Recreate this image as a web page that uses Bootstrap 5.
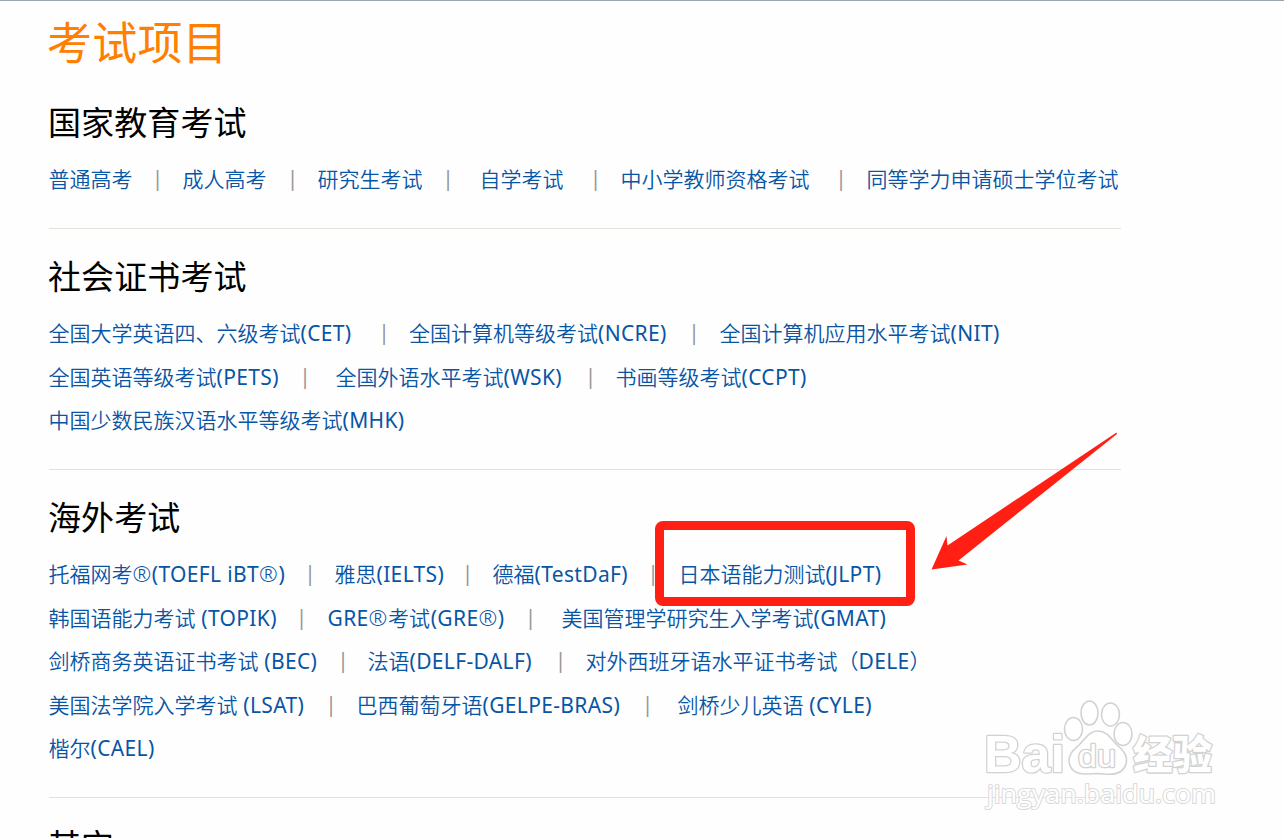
<!DOCTYPE html>
<html lang="zh-CN">
<head>
    <meta charset="UTF-8">
    <meta name="viewport" content="width=device-width, initial-scale=1.0">
    <title>考试项目</title>
    <link href="https://cdn.jsdelivr.net/npm/bootstrap@5.3.0/dist/css/bootstrap.min.css" rel="stylesheet">
    <style>
        body {
            background-color: #fefefe;
            font-family: "Noto Sans", "Noto Sans CJK SC", sans-serif;
            color: #000;
        }
        .page {
            height: 838px;
            border-top: 1px solid #98a6ab;
        }
        .exam-list {
            width: 1121px;
            padding: 8px 0 0 49px;
        }
        .page-title {
            font-family: "Noto Sans CJK SC", sans-serif;
            font-size: 45px;
            line-height: 64px;
            font-weight: 400;
            color: #ff8000;
            text-indent: -2px;
            letter-spacing: .2px;
        }
        .exam-group {
            padding: 18px 0 26.5px;
            border-bottom: 1px solid #e2e2d8;
        }
        .group-title {
            font-family: "Noto Sans CJK SC", sans-serif;
            font-size: 33px;
            line-height: 60px;
            font-weight: 400;
            margin-bottom: 7px;
            text-indent: -1px;
            letter-spacing: .1px;
        }
        .exam-group .group-title {
            margin-top: -2px;
        }
        .page-title + .exam-group {
            padding-top: 20px;
        }
        .exam-line {
            display: grid;
            height: 43.5px;
            line-height: 43.5px;
            font-size: 21px;
            font-weight: 350;
            white-space: nowrap;
        }
        .exam-line a {
            color: #0855a5;
            text-decoration: none;
            text-indent: -.5px;
        }
        .exam-line > span {
            width: 12px;
            line-height: 41px;
            text-align: center;
            font-weight: 400;
            color: #999;
        }
        .en {
            font-weight: 400;
            letter-spacing: .35px;
            margin-left: .8px;
        }
        .en:first-child {
            margin-left: 0;
        }
        .reg {
            font-size: 22.5px;
            font-weight: 300;
            line-height: 1;
            letter-spacing: .6px;
        }
        .line-gaokao { grid-template-columns: 102.5px 31.5px 103.5px 31.5px 124px 38px 109.5px 31.5px 214px 32px auto; }
        .line-cet { grid-template-columns: 329px 31.5px 278.5px 32px auto; }
        .line-pets { grid-template-columns: 250px 37px 248.5px 31.5px auto; }
        .line-toefl { grid-template-columns: 255px 31px 126.5px 31.5px 154px 32px auto; }
        .line-topik { grid-template-columns: 246.5px 32.5px 196.5px 37.5px auto; }
        .line-bec { grid-template-columns: 288px 31px 186.5px 31.5px auto; }
        .line-lsat { grid-template-columns: 276px 32px 284.5px 36.5px auto; }
        .red-box {
            left: 655px;
            top: 520px;
            width: 260px;
            height: 85px;
            border: 9px solid #ff2013;
            border-radius: 8px;
        }
        .arrow {
            left: 920px;
            top: 419px;
        }
        .watermark {
            left: 970px;
            top: 689px;
        }
    </style>
</head>
<body>
    <div class="page position-relative overflow-hidden">
        <main class="exam-list">
            <h1 class="page-title m-0">考试项目</h1>

            <section class="exam-group">
                <h2 class="group-title">国家教育考试</h2>
                <div class="exam-line line-gaokao">
                    <a href="#">普通高考</a><span>|</span>
                    <a href="#">成人高考</a><span>|</span>
                    <a href="#">研究生考试</a><span>|</span>
                    <a href="#">自学考试</a><span>|</span>
                    <a href="#">中小学教师资格考试</a><span>|</span>
                    <a href="#">同等学力申请硕士学位考试</a>
                </div>
            </section>

            <section class="exam-group">
                <h2 class="group-title">社会证书考试</h2>
                <div class="exam-line line-cet">
                    <a href="#">全国大学英语四、六级考试<span class="en">(CET)</span></a><span>|</span>
                    <a href="#">全国计算机等级考试<span class="en">(NCRE)</span></a><span>|</span>
                    <a href="#">全国计算机应用水平考试<span class="en">(NIT)</span></a>
                </div>
                <div class="exam-line line-pets">
                    <a href="#">全国英语等级考试<span class="en">(PETS)</span></a><span>|</span>
                    <a href="#">全国外语水平考试<span class="en">(WSK)</span></a><span>|</span>
                    <a href="#">书画等级考试<span class="en">(CCPT)</span></a>
                </div>
                <div class="exam-line">
                    <a href="#">中国少数民族汉语水平等级考试<span class="en">(MHK)</span></a>
                </div>
            </section>

            <section class="exam-group">
                <h2 class="group-title">海外考试</h2>
                <div class="exam-line line-toefl">
                    <a href="#">托福网考<span class="en"><span class="reg">®</span>(TOEFL iBT<span class="reg">®</span>)</span></a><span>|</span>
                    <a href="#">雅思<span class="en">(IELTS)</span></a><span>|</span>
                    <a href="#">德福<span class="en">(TestDaF)</span></a><span>|</span>
                    <a href="#">日本语能力测试<span class="en">(JLPT)</span></a>
                </div>
                <div class="exam-line line-topik">
                    <a href="#">韩国语能力考试<span class="en"> (TOPIK)</span></a><span>|</span>
                    <a href="#"><span class="en">GRE<span class="reg">®</span></span>考试<span class="en">(GRE<span class="reg">®</span>)</span></a><span>|</span>
                    <a href="#">美国管理学研究生入学考试<span class="en">(GMAT)</span></a>
                </div>
                <div class="exam-line line-bec">
                    <a href="#">剑桥商务英语证书考试<span class="en"> (BEC)</span></a><span>|</span>
                    <a href="#">法语<span class="en">(DELF-DALF)</span></a><span>|</span>
                    <a href="#">对外西班牙语水平证书考试（<span class="en">DELE</span>）</a>
                </div>
                <div class="exam-line line-lsat">
                    <a href="#">美国法学院入学考试<span class="en"> (LSAT)</span></a><span>|</span>
                    <a href="#">巴西葡萄牙语<span class="en">(GELPE-BRAS)</span></a><span>|</span>
                    <a href="#">剑桥少儿英语<span class="en"> (CYLE)</span></a>
                </div>
                <div class="exam-line">
                    <a href="#">楷尔<span class="en">(CAEL)</span></a>
                </div>
            </section>

            <section class="exam-group border-0">
                <h2 class="group-title">其它</h2>
            </section>
        </main>

        <!-- highlight around JLPT -->
        <div class="red-box position-absolute"></div>
        <svg class="arrow position-absolute" width="210" height="160" viewBox="920 420 210 160">
            <path d="M1116.5 432.5 L1117 434 L958.5 560.5 L967.5 564.5 L931.5 569.5 L946.5 536 L947.5 545.5 Z" fill="#ff2013"/>
        </svg>

        <!-- watermark -->
        <svg class="watermark position-absolute" width="260" height="140" viewBox="970 690 260 140">
            <g fill="#fff" stroke="#d2d2d2" stroke-width="1.6" stroke-linejoin="round">
                <ellipse cx="1073.5" cy="729" rx="9" ry="11.5"/>
                <ellipse cx="1089.5" cy="713" rx="8.5" ry="12"/>
                <ellipse cx="1110.5" cy="714.5" rx="9" ry="11.5"/>
                <ellipse cx="1123" cy="734" rx="9" ry="11.5"/>
                <path d="M1098 731 C1107 731 1111 739 1117 745 C1124 751 1128 756 1126 764 C1123 774 1114 775 1105 774 C1098 773 1093 774 1085 774 C1076 774 1070 770 1069 761 C1069 753 1074 750 1080 744 C1086 738 1089 731 1098 731 Z"/>
            </g>
            <g fill="#fff" stroke="#d2d2d2" stroke-width="2.6" stroke-linejoin="round" paint-order="stroke" font-family="'Liberation Sans', sans-serif">
                <text x="984" y="772" font-size="52" font-weight="700" textLength="81" lengthAdjust="spacingAndGlyphs">Bai</text>
                <text x="1078" y="767" font-size="32" textLength="38" lengthAdjust="spacingAndGlyphs">du</text>
                <text x="1133" y="769" font-size="40" font-weight="900" font-family="'Noto Sans CJK SC', sans-serif" textLength="79" lengthAdjust="spacingAndGlyphs">经验</text>
                <text x="987" y="803" font-size="26" font-family="'Open Sans', sans-serif" stroke-width="2" stroke="#dadada" textLength="229" lengthAdjust="spacingAndGlyphs">jingyan.baidu.com</text>
            </g>
        </svg>
    </div>

    <script src="https://cdn.jsdelivr.net/npm/bootstrap@5.3.0/dist/js/bootstrap.bundle.min.js"></script>
</body>
</html>
